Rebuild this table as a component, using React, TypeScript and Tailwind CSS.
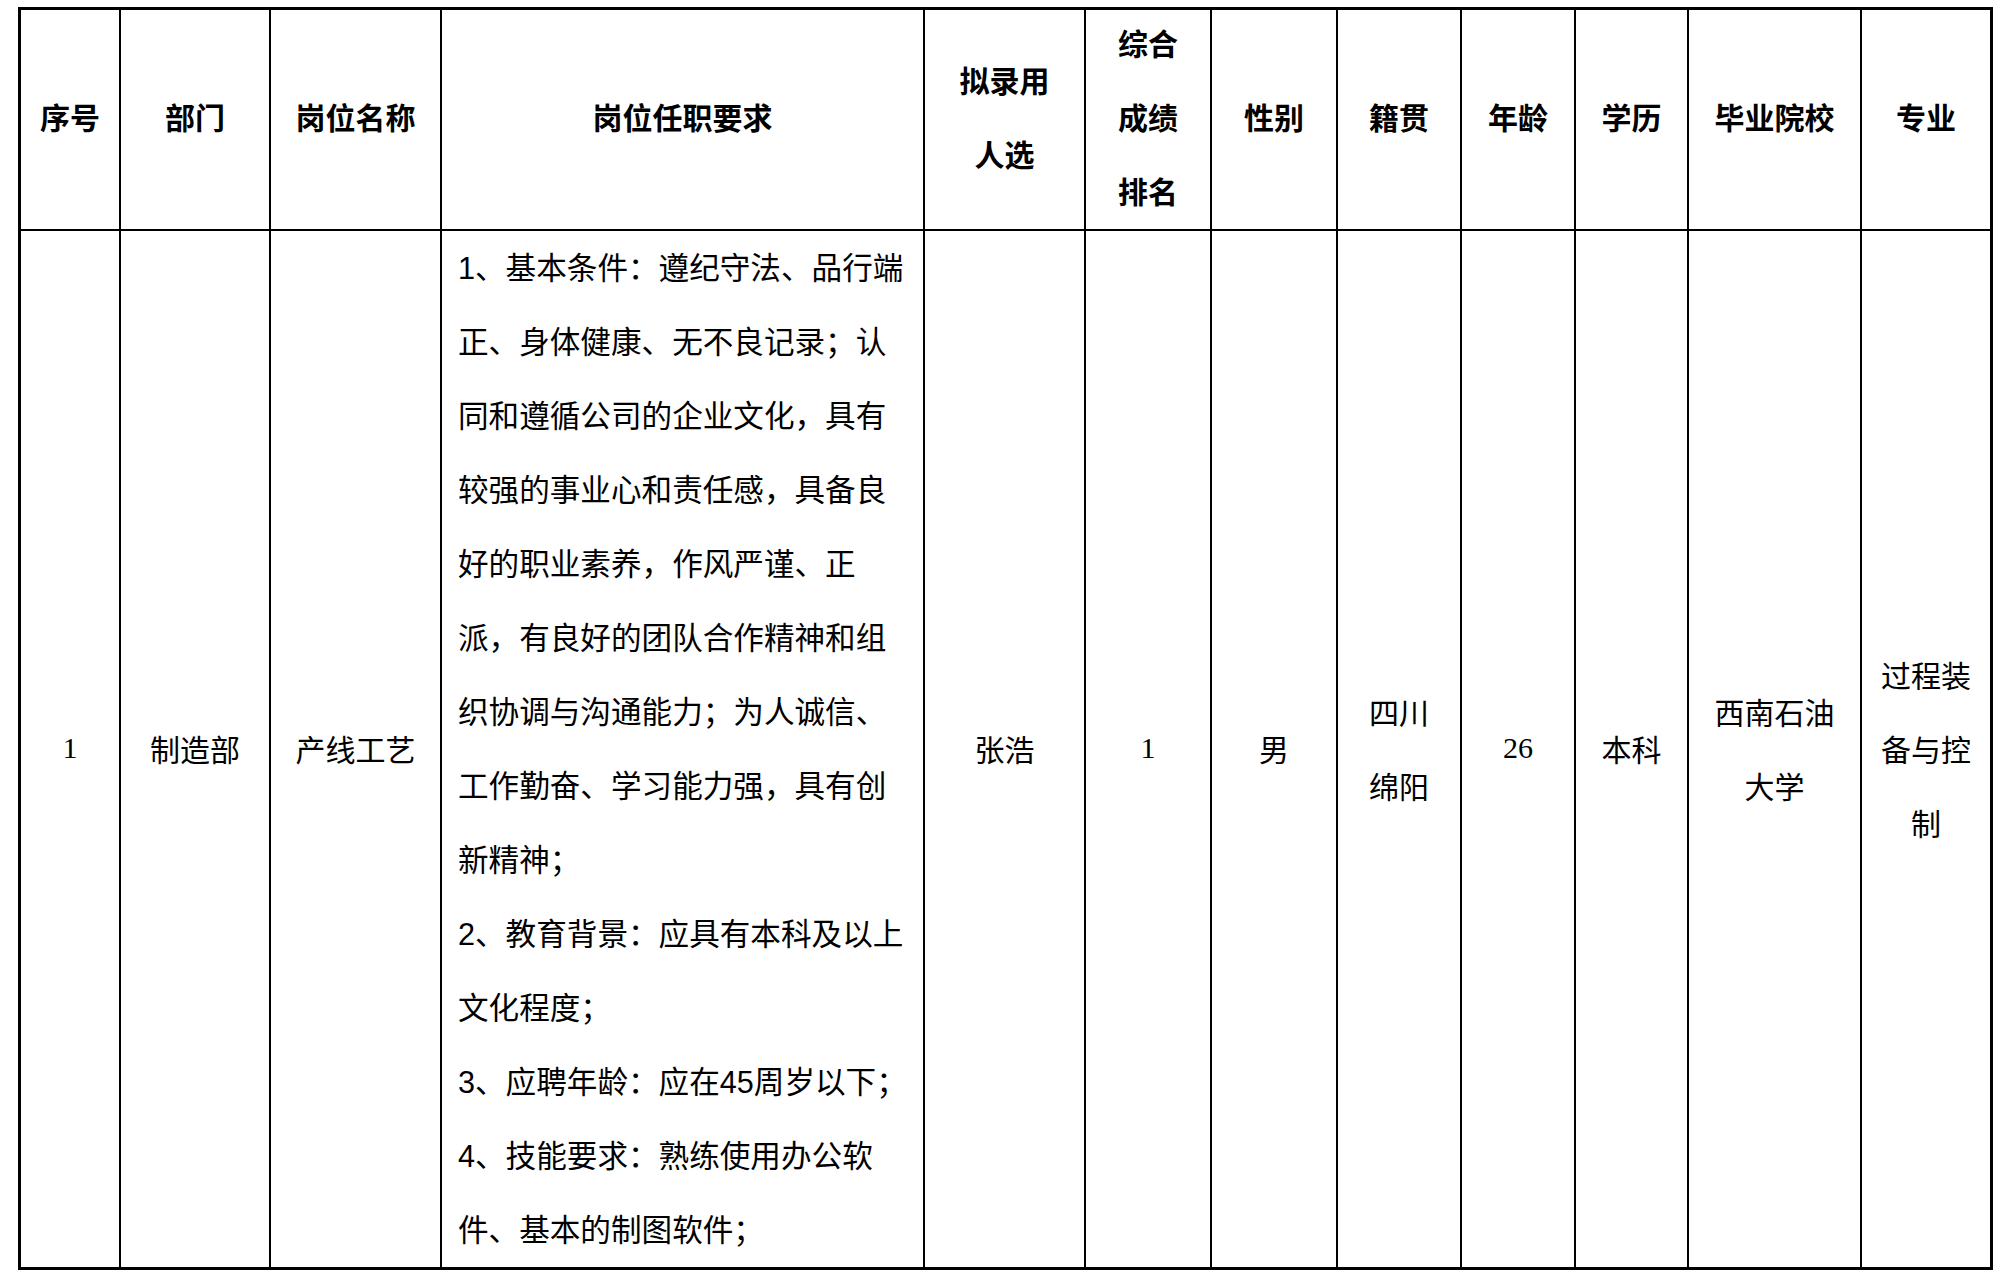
const cjk = "font-['Noto_Sans_CJK_SC',sans-serif]";
const serifNum = "font-['Liberation_Serif','Noto_Sans_CJK_SC',serif]";

const columns = [
  { head: ["序号"], body: ["1"], num: true },
  { head: ["部门"], body: ["制造部"] },
  { head: ["岗位名称"], body: ["产线工艺"] },
  { head: ["岗位任职要求"], body: null },
  { head: ["拟录用", "人选"], body: ["张浩"] },
  { head: ["综合", "成绩", "排名"], body: ["1"], num: true },
  { head: ["性别"], body: ["男"] },
  { head: ["籍贯"], body: ["四川", "绵阳"] },
  { head: ["年龄"], body: ["26"], num: true },
  { head: ["学历"], body: ["本科"] },
  { head: ["毕业院校"], body: ["西南石油", "大学"] },
  { head: ["专业"], body: ["过程装", "备与控", "制"] },
];

const requirements = [
  "1、基本条件：遵纪守法、品行端",
  "正、身体健康、无不良记录；认",
  "同和遵循公司的企业文化，具有",
  "较强的事业心和责任感，具备良",
  "好的职业素养，作风严谨、正",
  "派，有良好的团队合作精神和组",
  "织协调与沟通能力；为人诚信、",
  "工作勤奋、学习能力强，具有创",
  "新精神；",
  "2、教育背景：应具有本科及以上",
  "文化程度；",
  "3、应聘年龄：应在45周岁以下；",
  "4、技能要求：熟练使用办公软",
  "件、基本的制图软件；",
];

export default function App() {
  return (
    <div className="w-[2002px] h-[1280px] bg-white text-black overflow-hidden">
      <div className="ml-[18px] mt-[7px] w-fit border-[3px] border-black">
        <div className="grid grid-cols-[100px_150px_171px_483px_161px_126px_126px_124px_114px_113px_173px_128px] grid-rows-[221px_1036px]">
          {/* Header */}
          {columns.map((c, i) => (
            <div
              key={"h" + i}
              className={`flex flex-col items-center justify-center border-b-2 border-black pb-[7px] text-center text-[30px] leading-[74px] font-bold ${cjk} ${
                i < columns.length - 1 ? "border-r-2" : ""
              }`}
            >
              {c.head.map((t) => (
                <div key={t} className="whitespace-nowrap">{t}</div>
              ))}
            </div>
          ))}

          {/* Body */}
          {columns.map((c, i) => (
            <div
              key={"b" + i}
              className={`border-black ${i < columns.length - 1 ? "border-r-2" : ""}`}
            >
              {c.body ? (
                <div
                  className={`flex h-full flex-col items-center justify-center pb-[3px] text-center text-[30px] leading-[74px] ${
                    c.num ? serifNum : cjk
                  }`}
                >
                  {c.body.map((t) => (
                    <div key={t} className="whitespace-nowrap">{t}</div>
                  ))}
                </div>
              ) : (
                <div className="pl-[16px] text-[30.6px] leading-[74px] font-['Liberation_Sans','Noto_Sans_CJK_SC',sans-serif]">
                  {requirements.map((line) => (
                    <div key={line} className="whitespace-nowrap">{line}</div>
                  ))}
                </div>
              )}
            </div>
          ))}
        </div>
      </div>
    </div>
  );
}
